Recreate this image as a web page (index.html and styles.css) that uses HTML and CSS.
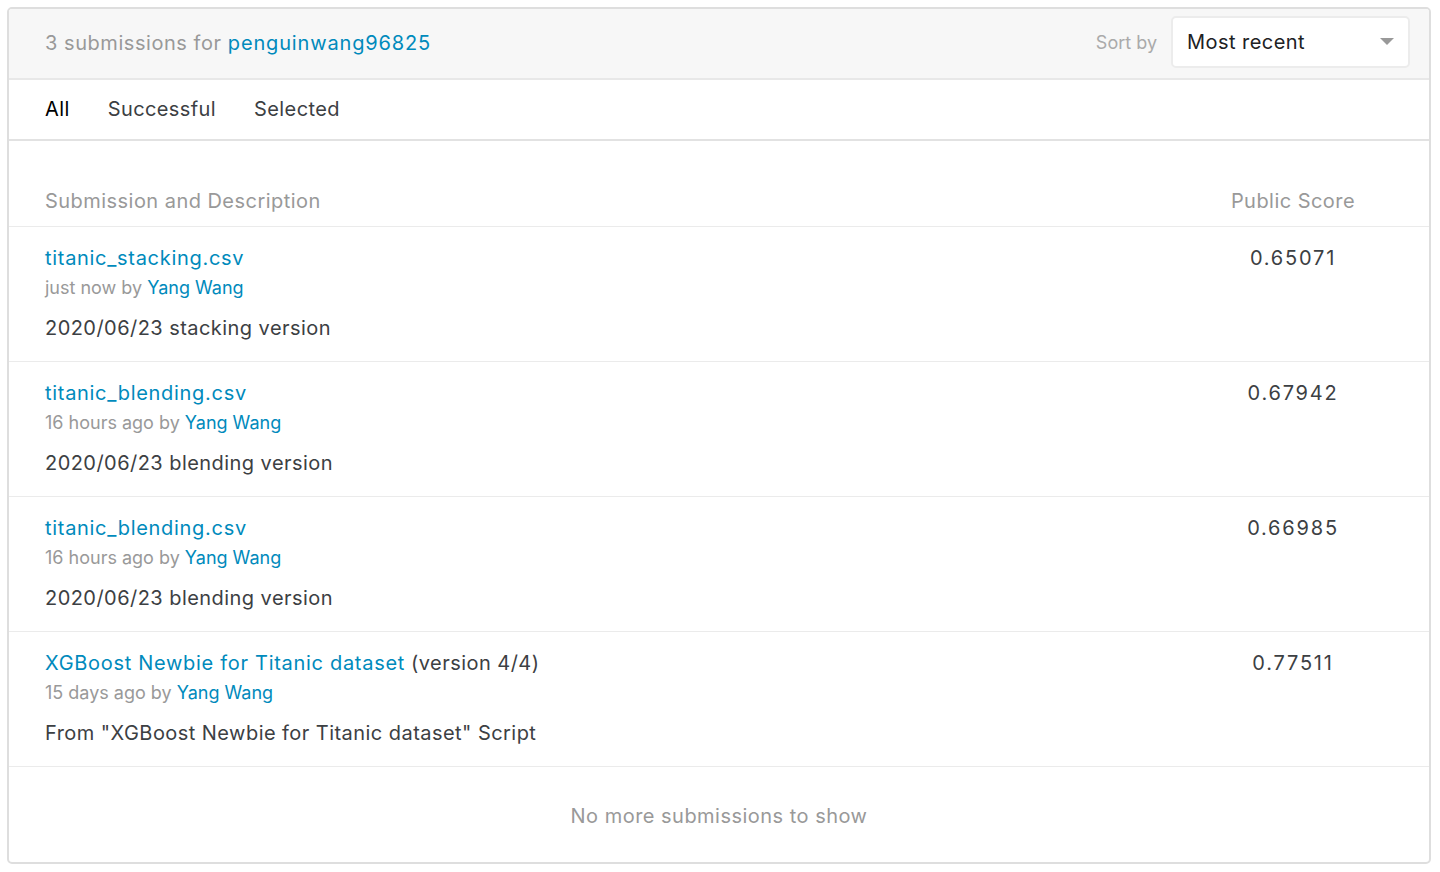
FILE: index.html
```html
<!DOCTYPE html>
<html lang="en">
<head>
<meta charset="utf-8">
<title>Submissions</title>
<link rel="stylesheet" href="styles.css">
</head>
<body>
<div class="card">
  <div class="header">
    <div class="title"><span class="muted">3 submissions for</span> <a class="link">penguinwang96825</a></div>
    <div class="sort">
      <span class="sort-label">Sort by</span>
      <div class="select">
        <span>Most recent</span>
        <svg class="caret" width="14" height="8" viewBox="0 0 14 8"><path d="M0 0 L14 0 L7 7 Z" fill="#999"/></svg>
      </div>
    </div>
  </div>
  <div class="tabs">
    <span class="tab active">All</span>
    <span class="tab">Successful</span>
    <span class="tab">Selected</span>
  </div>
  <div class="colhead">
    <span class="col-desc">Submission and Description</span>
    <span class="col-score">Public Score</span>
  </div>
  <div class="row">
    <div class="info">
      <div class="name"><a class="link">titanic_stacking.csv</a></div>
      <div class="meta">just now by <a class="link">Yang Wang</a></div>
      <div class="desc">2020/06/23 stacking version</div>
    </div>
    <div class="score">0.65071</div>
  </div>
  <div class="row">
    <div class="info">
      <div class="name"><a class="link">titanic_blending.csv</a></div>
      <div class="meta">16 hours ago by <a class="link">Yang Wang</a></div>
      <div class="desc">2020/06/23 blending version</div>
    </div>
    <div class="score">0.67942</div>
  </div>
  <div class="row">
    <div class="info">
      <div class="name"><a class="link">titanic_blending.csv</a></div>
      <div class="meta">16 hours ago by <a class="link">Yang Wang</a></div>
      <div class="desc">2020/06/23 blending version</div>
    </div>
    <div class="score">0.66985</div>
  </div>
  <div class="row">
    <div class="info">
      <div class="name"><a class="link">XGBoost Newbie for Titanic dataset</a> <span class="version">(version 4/4)</span></div>
      <div class="meta">15 days ago by <a class="link">Yang Wang</a></div>
      <div class="desc">From "XGBoost Newbie for Titanic dataset" Script</div>
    </div>
    <div class="score">0.77511</div>
  </div>
  <div class="footer">No more submissions to show</div>
</div>
</body>
</html>
```
FILE: styles.css
```css
* { box-sizing: border-box; }
html, body { margin: 0; padding: 0; background: #fff; }
body {
  font-family: Inter, "Noto Sans", sans-serif;
  color: #3c4043;
  padding: 7px 0 0 7px;
}
.card {
  width: 1424px;
  height: 857px;
  border: 2px solid #dedede;
  border-radius: 5px;
  overflow: hidden;
}
.link { color: #008abc; text-decoration: none; }
.name .link { letter-spacing: 0.7px; }
.title .link { letter-spacing: 0.85px; }
.muted { color: #999; }
.header {
  height: 71px;
  background: #f7f7f7;
  border-bottom: 2px solid #e8e8e8;
  display: flex;
  align-items: center;
  justify-content: space-between;
  padding: 0 19px 0 36px;
}
.title { font-size: 20px; line-height: 30px; letter-spacing: 0.55px; margin-top: -2px; }
.sort { display: flex; align-items: center; gap: 14px; }
.sort-label { font-size: 18px; color: #aaa; margin-top: -2px; }
.select {
  width: 239px;
  height: 52px;
  background: #fff;
  border: 2px solid #ececec;
  border-radius: 5px;
  display: flex;
  align-items: center;
  justify-content: space-between;
  padding: 0 14px 0 14px;
  font-size: 20px;
  letter-spacing: 0.45px;
  color: #202124;
  margin-top: -3px;
}
.tabs {
  height: 61px;
  border-bottom: 2px solid #e2e2e2;
  display: flex;
  align-items: center;
  gap: 38px;
  padding: 0 36px 2px 36px;
  font-size: 20px;
  letter-spacing: 0.4px;
}
.tab { color: #3c4043; }
.tab.active { color: #000; }
.colhead {
  display: flex;
  justify-content: space-between;
  padding: 45px 36px 10px 36px;
  border-bottom: 1px solid #ebebeb;
  font-size: 20px;
  line-height: 30px;
  letter-spacing: 0.46px;
  color: #999;
}
.col-score { width: 200px; text-align: center; }
.row {
  height: 135px;
  display: flex;
  justify-content: space-between;
  padding: 16px 36px 0 36px;
  border-bottom: 1px solid #ebebeb;
}
.name { font-size: 20px; line-height: 30px; letter-spacing: 0.45px; }
.version { color: #3c4043; }
.meta { font-size: 18px; line-height: 30px; color: #999; }
.desc { font-size: 20px; line-height: 30px; margin-top: 10px; color: #3c4043; letter-spacing: 0.45px; }
.score {
  width: 200px;
  text-align: center;
  font-size: 20px;
  line-height: 30px;
  letter-spacing: 1.8px;
  color: #3c4043;
}
.footer {
  height: 95px;
  display: flex;
  align-items: center;
  justify-content: center;
  font-size: 20px;
  letter-spacing: 0.48px;
  color: #999;
  padding-top: 3px;
}
```
